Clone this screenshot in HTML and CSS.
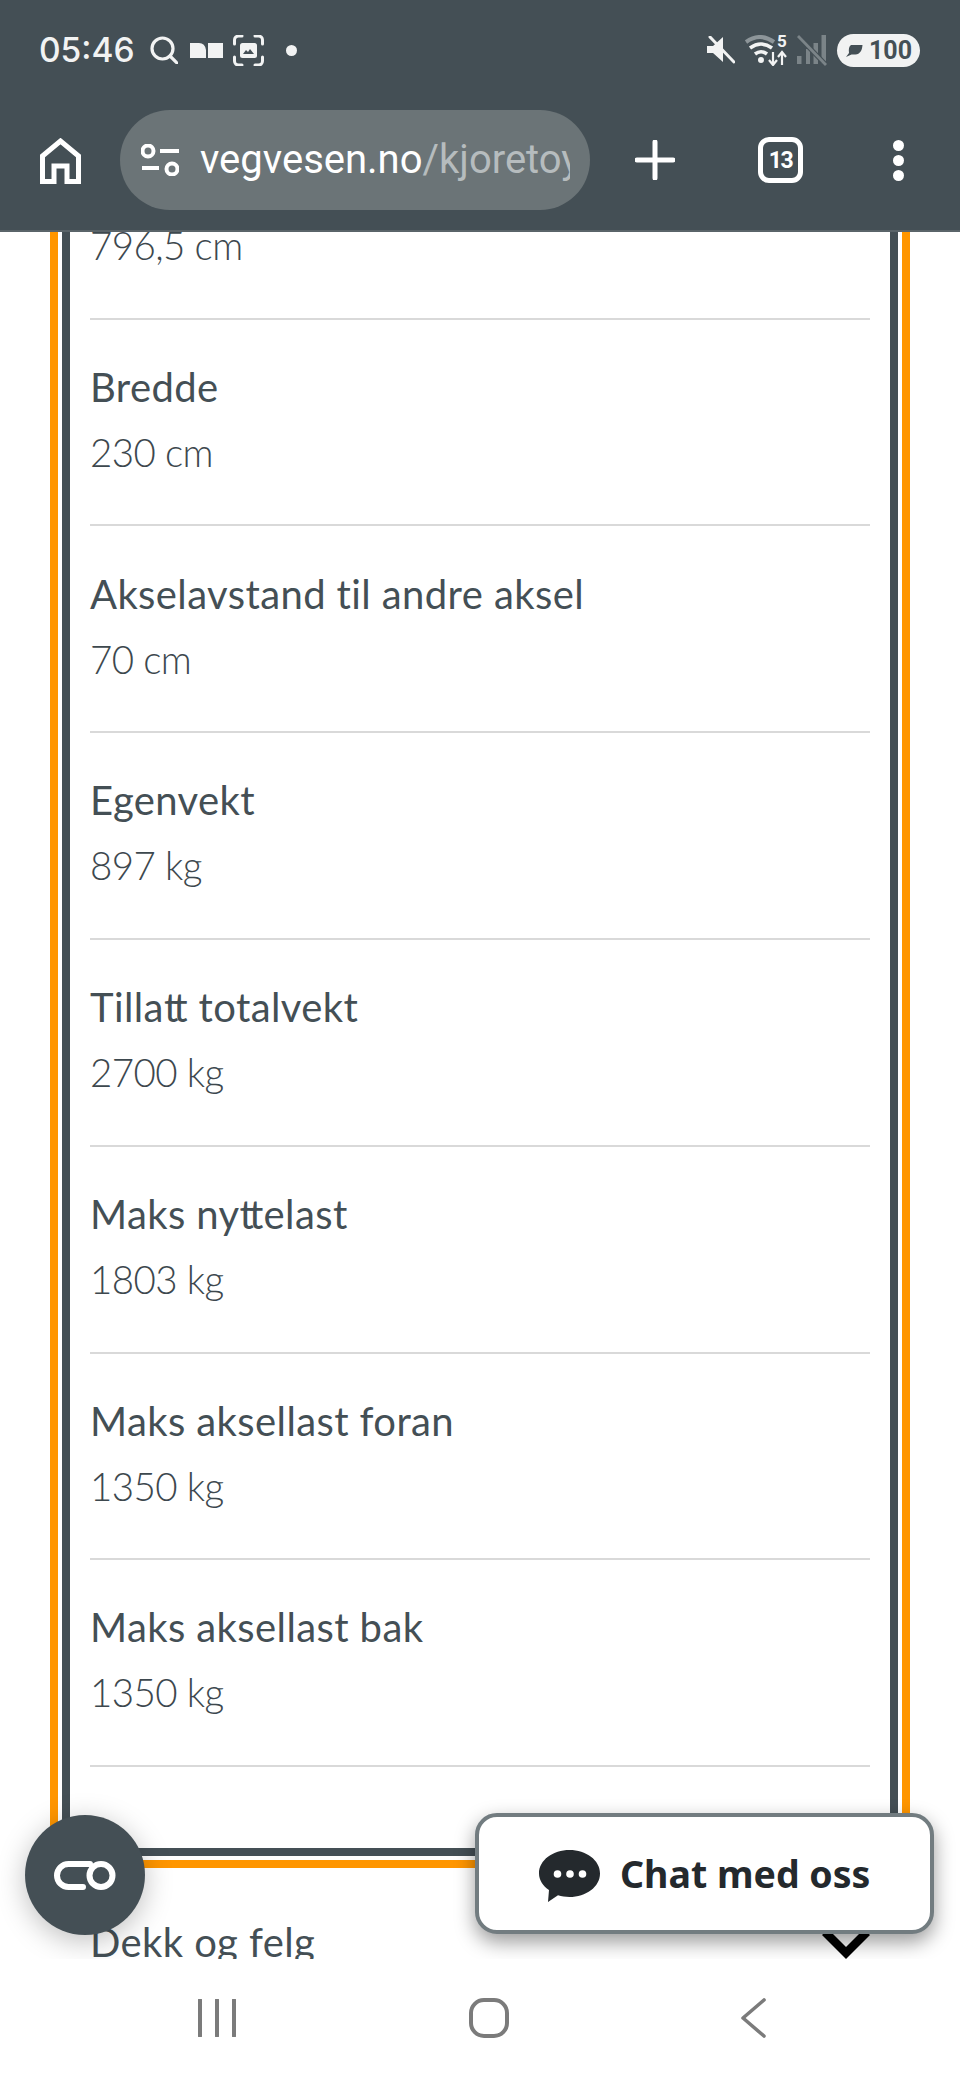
FILE: index.html
```html
<!DOCTYPE html>
<html lang="no">
<head>
<meta charset="utf-8">
<title>Kjøretøy</title>
<link rel="stylesheet" href="styles.css">
</head>
<body>
<div class="phone">
  <header class="chrome">
    <div class="status">
      <span class="time">05:46</span>
      <svg class="ic-search" viewBox="0 0 28 28"><circle cx="12.5" cy="12.5" r="10.5"/><path d="M20 20l7 7"/></svg>
      <svg class="ic-book" viewBox="0 0 33 15"><path d="M0 0h9q6 0 7 7v8H0zM18 0h15v15H18z"/></svg>
      <svg class="ic-shot" viewBox="0 0 31 31"><path class="corner" d="M1.5 9V5a4 4 0 0 1 4-4h3.500M22 1h3.500a4 4 0 0 1 4 4v4M29.500 22v4a4 4 0 0 1-4 4H22M9 30H5.500a4 4 0 0 1-4-4v-4"/><rect class="pic" x="7" y="8" width="17" height="15" rx="2.500"/><path class="hill" d="M10 19l3-4 2 2 2-3 4 5z"/></svg>
      <span class="notif-dot"></span>
      <span class="status-right">
        <svg class="ic-mute" viewBox="0 0 28 28"><path class="fill" d="M0 10h6l10-9v25l-10-9H0z"/><path class="slash" d="M3 1l24 25"/></svg>
        <svg class="ic-wifi" viewBox="0 0 42 31"><path class="far" d="M1 7Q15-3 29 7"/><path class="mid" d="M5 13q11-8 22 0M10 19q6-4.500 12 0"/><circle class="wdot" cx="16" cy="25" r="3"/><text class="wfive" x="37" y="12">5</text><path class="arrow" d="M28 17v13M24 25l4 5 4-5M37 30V17M33 22l4-5 4 5"/></svg>
        <svg class="ic-signal" viewBox="0 0 30 31"><path class="bars" d="M0 21h4.500v8H0zM9 14h4v15H9zM16.500 8H21v21h-4.500zM24.500 0H29v29h-4.500z"/><path class="sgap" d="M1 1l28 29"/><path class="sslash" d="M1 1l28 29"/></svg>
        <span class="battery">
          <svg class="ic-leaf" viewBox="0 0 18 13"><path d="M6 1h11.500c-.5 6-2.500 9-7 9.500H6.500L1 13l3-4C3.500 5 4 2.500 6 1z"/></svg>
          <span class="batt-num">100</span>
        </span>
      </span>
    </div>
    <div class="toolbar">
      <svg class="ic-home" viewBox="0 0 41 46"><path d="M2.500 43.500V18L20.500 3l18 15v25.500H27V28H14v15.500z"/></svg>
      <div class="pill">
        <svg class="ic-tune" viewBox="0 0 38 32"><circle cx="7" cy="7" r="5.500"/><path d="M19 7h19M1 24h17"/><circle cx="31" cy="25" r="5.500"/></svg>
        <span class="url"><span class="host">vegvesen.no</span><span class="path">/kjoretoy</span></span>
      </div>
      <svg class="ic-plus" viewBox="0 0 40 40"><path d="M20 2v36M2 20h36"/></svg>
      <span class="tabs">13</span>
      <span class="menu"><i></i><i></i><i></i></span>
    </div>
  </header>

  <main class="viewport">
    <div class="scroller">
      <section class="card-outer">
        <div class="card-inner">
          <div class="row"><div class="value">796,5 cm</div></div>
          <div class="row"><div class="label">Bredde</div><div class="value">230 cm</div></div>
          <div class="row"><div class="label">Akselavstand til andre aksel</div><div class="value">70 cm</div></div>
          <div class="row"><div class="label">Egenvekt</div><div class="value">897 kg</div></div>
          <div class="row"><div class="label">Tilla<span class="lig">t</span>t totalvekt</div><div class="value">2700 kg</div></div>
          <div class="row"><div class="label">Maks ny<span class="lig">t</span>telast</div><div class="value">1803 kg</div></div>
          <div class="row"><div class="label">Maks aksellast foran</div><div class="value">1350 kg</div></div>
          <div class="row"><div class="label">Maks aksellast bak</div><div class="value">1350 kg</div></div>
        </div>
      </section>
      <div class="next-section">
        <span class="label">Dekk og felg</span>
        <svg class="ic-chevron" viewBox="0 0 48 36"><path d="M0 12L6 6l18 18L42 6l6 6-24 24z"/></svg>
      </div>
    </div>
    <button class="fab" type="button" aria-label="CO2">
      <svg viewBox="0 0 62 29"><path d="M36 3H14.500a11.500 11.500 0 0 0 0 23H29"/><circle cx="47" cy="14.500" r="11.500"/></svg>
    </button>
    <button class="chat" type="button">
      <svg class="ic-bubble" viewBox="0 0 61 52"><path class="bub" d="M30.500 0C47 0 61 10 61 23.500S47 47 30.500 47c-4 0-8-.5-11.500-1.700L9 52l1-12C4 36 0 30 0 23.500 0 10 14 0 30.500 0z"/><circle cx="18.500" cy="24" r="3.800"/><circle cx="31" cy="24" r="3.800"/><circle cx="43.500" cy="24" r="3.800"/></svg>
      <span>Chat med oss</span>
    </button>
  </main>

  <nav class="navbar">
    <svg class="ic-recents" viewBox="0 0 40 38"><path d="M3 1v36M20 1v36M37 1v36"/></svg>
    <svg class="ic-homebtn" viewBox="0 0 40 40"><rect x="2" y="2" width="36" height="36" rx="13"/></svg>
    <svg class="ic-back" viewBox="0 0 26 40"><path d="M24 2L3 20l21 18"/></svg>
  </nav>
</div>
</body>
</html>
```
FILE: styles.css
```css
* { box-sizing: border-box; }
html, body { margin: 0; padding: 0; background: #fff; }
.phone { width: 960px; height: 2080px; display: flex; flex-direction: column; overflow: hidden; font-family: "Lato", sans-serif; }
svg { display: block; flex: none; }

/* browser chrome */
.chrome { height: 232px; flex: none; background: #444f55; border-bottom: 2px solid #5a6469; }
.status { height: 83px; padding: 17px 40px 0 39px; display: flex; align-items: center; }
.time { font-family: "Inter", sans-serif; font-weight: 500; font-size: 33.500px; line-height: 40px; color: #f2f3f3; width: 93px; white-space: nowrap; }
.ic-search { width: 28px; height: 28px; margin-left: 18px; fill: none; stroke: #f2f3f3; stroke-width: 3.2; stroke-linecap: round; }
.ic-book { width: 33px; height: 15px; margin-left: 12px; fill: #f2f3f3; }
.ic-shot { width: 31px; height: 31px; margin-left: 10px; }
.ic-shot .corner { fill: none; stroke: #f2f3f3; stroke-width: 3; stroke-linecap: round; }
.ic-shot .pic { fill: #f2f3f3; }
.ic-shot .hill { fill: #444f55; }
.notif-dot { width: 11px; height: 11px; border-radius: 50%; background: #f2f3f3; margin-left: 22px; }
.status-right { margin-left: auto; display: flex; align-items: center; }
.ic-mute { width: 28px; height: 28px; }
.ic-mute .fill { fill: #f2f3f3; }
.ic-mute .slash { fill: none; stroke: #f2f3f3; stroke-width: 3; stroke-linecap: round; }
.ic-wifi { width: 42px; height: 31px; margin-left: 10px; }
.ic-wifi .far { fill: none; stroke: #8d9599; stroke-width: 4; }
.ic-wifi .mid { fill: none; stroke: #f2f3f3; stroke-width: 3.6; }
.ic-wifi .wdot { fill: #f2f3f3; }
.ic-wifi .wfive { fill: #f2f3f3; font-family: "Roboto", sans-serif; font-weight: 700; font-size: 17px; text-anchor: middle; }
.ic-wifi .arrow { fill: none; stroke: #f2f3f3; stroke-width: 2.2; }
.ic-signal { width: 30px; height: 31px; margin-left: 10px; }
.ic-signal .bars { fill: #7b8488; }
.ic-signal .sgap { fill: none; stroke: #444f55; stroke-width: 5; }
.ic-signal .sslash { fill: none; stroke: #7b8488; stroke-width: 2.800; }
.battery { width: 83px; height: 33px; margin-left: 10px; border-radius: 17px; background: #f1f2f2; display: flex; align-items: center; padding-left: 8px; }
.ic-leaf { width: 18px; height: 13px; fill: #444f55; }
.batt-num { font-family: "Roboto", sans-serif; font-weight: 700; font-size: 25px; line-height: 33px; color: #444f55; margin-left: 6px; }

.toolbar { display: flex; align-items: center; padding-left: 40px; margin-top: 27px; height: 100px; }
.ic-home { width: 41px; height: 46px; margin-top: 1px; fill: none; stroke: #fff; stroke-width: 5; }
.pill { width: 470px; height: 100px; margin-left: 39px; border-radius: 50px; background: #6b7477; display: flex; align-items: center; padding-left: 21px; }
.ic-tune { width: 38px; height: 32px; fill: none; stroke: #fff; stroke-width: 4; }
.url { margin-left: 21px; width: 370px; overflow: hidden; white-space: nowrap; font-family: "Roboto", sans-serif; font-size: 40px; line-height: 60px; }
.host { color: #fff; }
.path { color: #b6bcbe; }
.ic-plus { width: 40px; height: 40px; margin-left: 45px; fill: none; stroke: #fff; stroke-width: 5; stroke-linecap: round; }
.tabs { width: 45px; height: 46px; margin-left: 83px; border: 5px solid #fff; border-radius: 11px; color: #fff; font-family: "Roboto", sans-serif; font-weight: 700; font-size: 23px; letter-spacing: -1.500px; display: flex; align-items: center; justify-content: center; }
.menu { width: 12px; margin-left: 90px; display: flex; flex-direction: column; gap: 4px; }
.menu i { display: block; width: 11px; height: 11px; border-radius: 50%; background: #fff; }

/* page */
.viewport { position: relative; flex: 1; overflow: hidden; background: #fff; }
.scroller { margin-top: -40px; padding: 0 50px; }
.card-outer { border: 8px solid #ff9600; padding: 4px; }
.card-inner { border: 8px solid #444f55; padding: 0 20px 80.500px; background: #fff; }
.row { padding: 35.200px 0 40.600px; border-bottom: 2px solid #d9d9d9; }
.row:first-child { padding-top: 0; }
.label { font-size: 40px; letter-spacing: .4px; line-height: 64px; color: #444f55; }
.lig { letter-spacing: -5px; }
.value { margin-top: 1px; font-size: 38.500px; letter-spacing: -.6px; line-height: 64px; font-weight: 300; color: #3d484e; }
.next-section { display: flex; justify-content: space-between; align-items: flex-start; margin-top: 42.500px; padding: 0 40px; }
.ic-chevron { width: 48px; height: 36px; margin-top: 12.500px; fill: #000; }

/* floating */
.fab { position: absolute; left: 25px; bottom: 24px; width: 120px; height: 120px; border: 0; padding: 0; border-radius: 50%; background: #444f55; box-shadow: 0 6px 28px rgba(0,0,0,.25); display: flex; align-items: center; justify-content: center; }
.fab svg { width: 62px; height: 29px; fill: none; stroke: #fff; stroke-width: 6; stroke-linecap: round; }
.chat { position: absolute; right: 26px; bottom: 25px; width: 459px; height: 121px; background: #fff; border: 4px solid #727c80; border-radius: 22px; padding: 0 0 0 60px; display: flex; align-items: center; gap: 20px; box-shadow: 0 8px 20px rgba(0,0,0,.4); font-family: "Noto Sans", sans-serif; font-weight: 700; font-size: 37.500px; color: #24292d; }
.ic-bubble { width: 61px; height: 52px; margin-top: 4px; }
.ic-bubble .bub { fill: #24292d; }
.ic-bubble circle { fill: #fff; }

/* android nav */
.navbar { height: 121px; flex: none; background: #fff; display: flex; justify-content: space-between; align-items: flex-start; padding: 39px 194px 0 197px; }
.ic-recents { width: 40px; height: 38px; margin-top: 1px; fill: none; stroke: #7b7b7b; stroke-width: 4; stroke-linecap: round; }
.ic-homebtn { width: 40px; height: 40px; fill: none; stroke: #7b7b7b; stroke-width: 4; }
.ic-back { width: 26px; height: 40px; fill: none; stroke: #7b7b7b; stroke-width: 3.600; stroke-linecap: round; stroke-linejoin: round; }
```
